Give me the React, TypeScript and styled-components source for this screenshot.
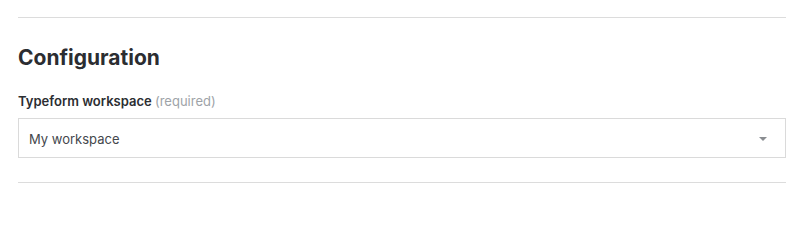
import React from "react";
import styled, { createGlobalStyle } from "styled-components";

const Global = createGlobalStyle`
  html, body { margin: 0; padding: 0; background: #fff; }
  body { font-family: Inter, "Noto Sans", sans-serif; color: #2b2d31; }
`;

const Page = styled.div`
  padding: 17px 16px 0 18px;
  width: 768px;
`;

const Divider = styled.hr`
  border: 0;
  border-top: 1px solid #dcdcdc;
  margin: 0;
`;

const Heading = styled.h2`
  margin: 27px 0 0;
  font-size: 21px;
  line-height: 26px;
  font-weight: 700;
  color: #2b2d31;
`;

const Label = styled.label`
  display: block;
  margin-top: 21px;
  font-size: 13px;
  line-height: 18px;
  font-weight: 600;
  color: #2b2d31;
`;

const Hint = styled.span`
  font-weight: 400;
  color: #9ea3a8;
`;

const Select = styled.div`
  box-sizing: border-box;
  margin-top: 8px;
  height: 40px;
  border: 1px solid #dadada;
  display: flex;
  align-items: center;
  justify-content: space-between;
  padding: 1px 18px 0 10px;
  font-size: 13px;
  color: #44474c;
`;

const Caret = styled.span`
  width: 0;
  height: 0;
  border-left: 4px solid transparent;
  border-right: 4px solid transparent;
  border-top: 4px solid #8a8d91;
`;

const Bottom = styled(Divider)`
  margin-top: 24px;
`;

export default function App() {
  return (
    <>
      <Global />
      <Page>
        <Divider />
        <Heading>Configuration</Heading>
        <Label>
          Typeform workspace <Hint>(required)</Hint>
        </Label>
        <Select>
          <span>My workspace</span>
          <Caret />
        </Select>
        <Bottom />
      </Page>
    </>
  );
}
